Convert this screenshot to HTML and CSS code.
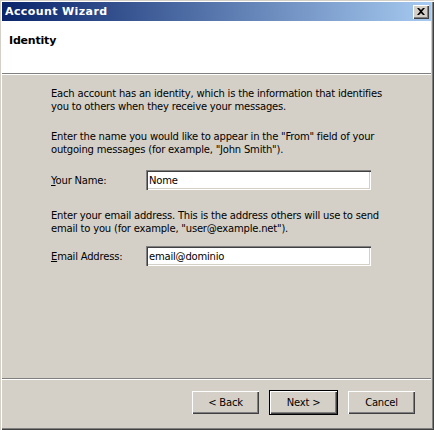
FILE: index.html
```html
<!DOCTYPE html>
<html lang="en">
<head>
    <meta charset="UTF-8">
    <title>Account Wizard</title>
    <link rel="stylesheet" href="styles.css">
</head>
<body>
    <div class="window">
        <div class="titlebar">
            <span class="title">Account Wizard</span>
            <span class="close">
                <svg width="8" height="7" viewBox="0 0 8 7"><path d="M0 0h2l2 2 2-2h2L5 3.5 8 7H6L4 5 2 7H0l3-3.5z" fill="#000"/></svg>
            </span>
        </div>
        <div class="header">
            <div class="page-title">Identity</div>
        </div>
        <div class="content">
            <p>Each account has an identity, which is the information that identifies you to others when they receive your messages.</p>
            <p>Enter the name you would like to appear in the "From" field of your outgoing messages (for example, "John Smith").</p>
            <div class="field">
                <label><u>Y</u>our Name:</label>
                <input type="text" value="Nome">
            </div>
            <p>Enter your email address. This is the address others will use to send email to you (for example, "user@example.net").</p>
            <div class="field email">
                <label><u>E</u>mail Address:</label>
                <input type="text" value="email@dominio">
            </div>
        </div>
        <div class="footer">
            <button>&lt; Back</button>
            <button class="default">Next &gt;</button>
            <button>Cancel</button>
        </div>
    </div>
</body>
</html>
```

FILE: styles.css
```css
body {
    margin: 0;
    font-family: "DejaVu Sans", Tahoma, sans-serif;
    font-size: 10px;
    color: #000;
    background-color: #d4d0c8;
}
.window {
    width: 434px;
    height: 430px;
    box-sizing: border-box;
    display: flex;
    flex-direction: column;
    padding: 2px 3px 3px 2px;
    background-color: #d4d0c8;
    box-shadow: inset 1px 1px 0 #d4d0c8, inset 2px 2px 0 #fff, inset -1px -1px 0 #404040, inset -2px -2px 0 #808080;
}
.titlebar {
    height: 19px;
    display: flex;
    justify-content: space-between;
    align-items: center;
    padding: 0 2px 0 3px;
    background: linear-gradient(to right, #0a246a, #a6caf0);
    color: #fff;
}
.title {
    font-weight: bold;
    font-size: 11px;
    letter-spacing: 0.4px;
}
.close {
    width: 16px;
    height: 14px;
    box-sizing: border-box;
    display: flex;
    justify-content: center;
    align-items: center;
    background-color: #d4d0c8;
    box-shadow: inset 1px 1px 0 #fff, inset -1px -1px 0 #404040, inset -2px -2px 0 #808080;
}
.header {
    height: 53px;
    background-color: #fff;
    padding: 13px 0 0 7px;
    box-sizing: border-box;
    border-bottom: 1px solid #808080;
    box-shadow: 0 1px 0 #fff;
}
.page-title {
    font-weight: bold;
    font-size: 11px;
    letter-spacing: -0.2px;
}
.content {
    flex: 1;
    padding: 13px 16px 0 49px;
    letter-spacing: -0.2px;
}
.content p {
    margin: 0 0 17px;
    line-height: 13px;
    width: 340px;
}
.field {
    display: flex;
    align-items: center;
    margin: -3px 0 19px;
}
.field.email {
    margin-top: -6px;
}
.field label {
    width: 95px;
}
.field input {
    width: 225px;
    height: 20px;
    box-sizing: border-box;
    border: none;
    padding: 1px 3px 0;
    font-family: inherit;
    font-size: 10px;
    letter-spacing: -0.2px;
    background-color: #fff;
    box-shadow: inset 1px 1px 0 #808080, inset 2px 2px 0 #404040, inset -1px -1px 0 #fff, inset -2px -2px 0 #d4d0c8;
}
.footer {
    height: 49px;
    box-sizing: border-box;
    display: flex;
    justify-content: flex-end;
    gap: 11px;
    padding: 12px 16px 0 0;
    border-top: 1px solid #808080;
    box-shadow: inset 0 1px 0 #fff;
}
.footer button {
    width: 67px;
    height: 23px;
    border: none;
    font-family: inherit;
    font-size: 10px;
    letter-spacing: -0.2px;
    background-color: #d4d0c8;
    box-shadow: inset 1px 1px 0 #fff, inset -1px -1px 0 #404040, inset -2px -2px 0 #808080;
}
.footer button.default {
    box-shadow: 0 0 0 1px #000, inset 1px 1px 0 #fff, inset -1px -1px 0 #404040, inset -2px -2px 0 #808080;
}
```
